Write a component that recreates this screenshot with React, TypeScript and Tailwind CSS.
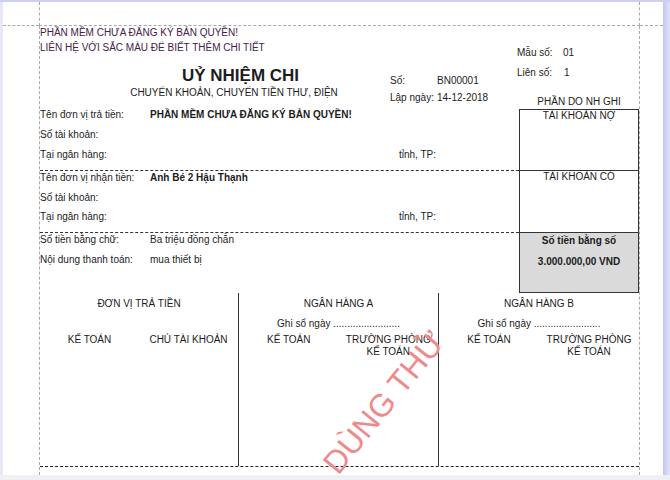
function Row({ label, value, bold, extra }: { label: string; value?: string; bold?: boolean; extra?: string }) {
  return (
    <div className="grid grid-cols-[110px_249px_auto] h-[12px]">
      <span>{label}</span>
      <span className={bold ? "font-bold" : ""}>{value ?? ""}</span>
      <span>{extra ?? ""}</span>
    </div>
  );
}

function SigPair({ a, b }: { a: string; b: React.ReactNode }) {
  return (
    <div className="mt-[4px] flex">
      <div className="flex-1 text-center">{a}</div>
      <div className="flex-1 text-center">{b}</div>
    </div>
  );
}

export default function App() {
  const dots = "........................";
  return (
    <div className="relative w-[670px] h-[480px] overflow-hidden bg-[#eef0f6] flex flex-col font-['Liberation_Sans',Arial,sans-serif] text-[10px] leading-[12px] text-[#1c1c1c]">
      <div className="h-[2px] bg-[#cdd0ec]" />
      <div className="flex flex-1 min-h-0">
        <div className="w-[3px] bg-[#e6e8f7]" />
        <div className="w-[660px] bg-white flex flex-col">
          <div className="flex h-[24px] shrink-0">
            <div className="w-[36px] border-b border-dashed border-[#a9a9a9]" />
            <div className="w-[601px] border-x border-b border-dashed border-[#a9a9a9]" />
            <div className="flex-1 border-b border-dashed border-[#a9a9a9]" />
          </div>
          <div className="flex flex-1">
            <div className="w-[36px]" />
            <div className="w-[601px] border-x border-dashed border-[#a9a9a9] flex flex-col">
              <div className="flex">
                {/* left column */}
                <div className="w-[479px] flex flex-col">
                  <div className="h-[81px] pt-[1px] flex flex-col">
                    <div className="text-[#43214a]">PHẦN MỀM CHƯA ĐĂNG KÝ BẢN QUYỀN!</div>
                    <div className="mt-[3px] text-[#43214a]">LIÊN HỆ VỚI SẮC MÀU ĐỂ BIẾT THÊM CHI TIẾT</div>
                    <div className="flex items-start">
                      <div className="ml-[84px] w-[220px] text-center">
                        <div className="mt-[12px] pl-[13px] text-[17px] leading-[20px] font-bold">UỶ NHIỆM CHI</div>
                        <div className="mt-[1px] text-[10px] leading-[12px]">CHUYỂN KHOẢN, CHUYỂN TIỀN THƯ, ĐIỆN</div>
                      </div>
                      <div className="ml-[46px] mt-[18px] grid grid-cols-[47px_auto] leading-[17px]">
                        <span>Số:</span>
                        <span>BN00001</span>
                        <span>Lập ngày:</span>
                        <span>14-12-2018</span>
                      </div>
                    </div>
                  </div>
                  <div className="h-[64px] pt-[2px] border-b border-dashed border-[#333] flex flex-col gap-[8px]">
                    <Row label="Tên đơn vị trả tiền:" value="PHẦN MỀM CHƯA ĐĂNG KÝ BẢN QUYỀN!" bold />
                    <Row label="Số tài khoản:" />
                    <Row label="Tại ngân hàng:" extra="tỉnh, TP:" />
                  </div>
                  <div className="h-[62px] pt-[1px] border-b border-dashed border-[#333] flex flex-col gap-[7.5px]">
                    <Row label="Tên đơn vị nhận tiền:" value="Anh Bé 2 Hậu Thạnh" bold />
                    <Row label="Số tài khoản:" />
                    <Row label="Tại ngân hàng:" extra="tỉnh, TP:" />
                  </div>
                  <div className="h-[60px] pt-[1px] flex flex-col gap-[8px]">
                    <Row label="Số tiền bằng chữ:" value="Ba triệu đồng chẵn" />
                    <Row label="Nội dung thanh toán:" value="mua thiết bị" />
                  </div>
                </div>
                {/* right column */}
                <div className="w-[120px] flex flex-col">
                  <div className="h-[83px] flex flex-col">
                    <div className="-ml-[2px] mt-[16.5px] grid grid-cols-[46px_auto] leading-[20px]">
                      <span>Mẫu số:</span>
                      <span>01</span>
                      <span>Liên số:</span>
                      <span className="pl-[1px]">1</span>
                    </div>
                    <div className="mt-[13px] text-center">PHẦN DO NH GHI</div>
                  </div>
                  <div className="h-[184px] border border-[#333] flex flex-col">
                    <div className="h-[61px] border-b border-[#333] text-center">TÀI KHOẢN NỢ</div>
                    <div className="h-[62px] border-b border-[#333] text-center">TÀI KHOẢN CÓ</div>
                    <div className="flex-1 bg-[#dadada] text-center font-bold pt-[2px]">
                      <div>Số tiền bằng số</div>
                      <div className="mt-[9px]">3.000.000,00 VND</div>
                    </div>
                  </div>
                </div>
              </div>
              {/* signatures */}
              <div className="h-[174px] border-b border-dashed border-[#222] flex">
                <div className="w-[198px] flex flex-col pt-[5px]">
                  <div className="text-center">ĐƠN VỊ TRẢ TIỀN</div>
                  <div className="mt-[8px] h-[12px]" />
                  <SigPair a="KẾ TOÁN" b="CHỦ TÀI KHOẢN" />
                </div>
                <div className="w-[200px] border-l border-[#333] flex flex-col pt-[5px]">
                  <div className="text-center">NGÂN HÀNG A</div>
                  <div className="mt-[8px] text-center">Ghi sổ ngày {dots}</div>
                  <SigPair
                    a="KẾ TOÁN"
                    b={
                      <>
                        TRƯỜNG PHÒNG
                        <br />
                        KẾ TOÁN
                      </>
                    }
                  />
                </div>
                <div className="flex-1 border-l border-[#333] flex flex-col pt-[5px]">
                  <div className="text-center">NGÂN HÀNG B</div>
                  <div className="mt-[8px] text-center">Ghi sổ ngày {dots}</div>
                  <SigPair
                    a="KẾ TOÁN"
                    b={
                      <>
                        TRƯỜNG PHÒNG
                        <br />
                        KẾ TOÁN
                      </>
                    }
                  />
                </div>
              </div>
            </div>
            <div className="flex-1" />
          </div>
        </div>
        <div className="w-[7px] bg-gradient-to-r from-[#c3c6ee] to-[#e3e5f7]" />
      </div>
      <div className="h-[5px] bg-[#eef0f4]" />
      {/* watermark */}
      <div className="absolute left-[384px] top-[402px] -translate-x-1/2 -translate-y-1/2 -rotate-[51deg] whitespace-nowrap text-[32px] leading-[32px] text-[#f08a8a] z-10 pointer-events-none">
        DÙNG THỬ
      </div>
    </div>
  );
}
